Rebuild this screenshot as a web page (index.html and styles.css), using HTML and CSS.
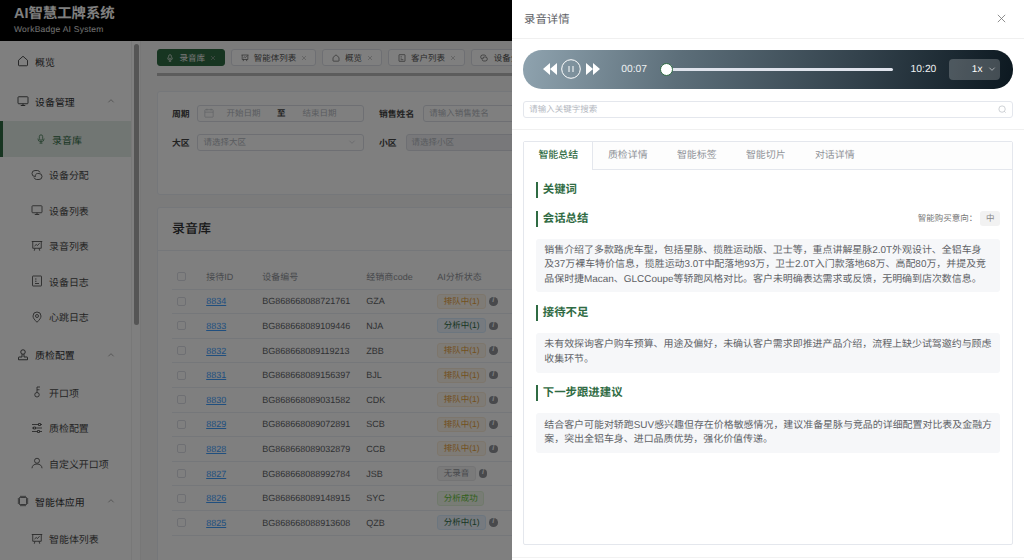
FILE: index.html
```html
<!DOCTYPE html>
<html lang="zh-CN">
<head>
    <meta charset="UTF-8">
    <meta name="viewport" content="width=device-width, initial-scale=1.0">
    <title>录音详情</title>
    <link rel="stylesheet" href="styles.css">
</head>
<body>
    <!-- icons -->
    <svg class="icon-defs" xmlns="http://www.w3.org/2000/svg">
        <symbol id="i-home" viewBox="0 0 24 24"><path d="M3 10.500 12 2.500l9 8V20a1.500 1.500 0 0 1-1.500 1.500h-15A1.500 1.500 0 0 1 3 20z"/></symbol>
        <symbol id="i-monitor" viewBox="0 0 24 24"><rect x="2" y="3.500" width="20" height="14" rx="1.500"/><path d="M12 17.500v3.500M7.500 21h9"/></symbol>
        <symbol id="i-mic" viewBox="0 0 24 24"><rect x="8" y="2" width="8" height="13" rx="4"/><path d="M4.500 11a7.500 7.500 0 0 0 15 0M12 18.500V22M8.500 22h7"/></symbol>
        <symbol id="i-link" viewBox="0 0 24 24"><path d="M9 15H8A6 6 0 0 1 8 3h5a6 6 0 0 1 5 4"/><path d="M13 9h3a6 6 0 0 1 0 12h-5a6 6 0 0 1-5-4"/><path d="M9 15a4.500 4.500 0 0 1 4-6"/></symbol>
        <symbol id="i-board" viewBox="0 0 24 24"><path d="M1.500 3h21M3.500 3v13.500h17V3M8 16.500 6.500 21.500M16 16.500l1.500 5"/><path d="m7 12 3.500-3 2.500 2 4-4.500"/></symbol>
        <symbol id="i-log" viewBox="0 0 24 24"><rect x="3" y="2" width="18" height="20" rx="1"/><path d="M8 8h3M8 12.500h3M8 17h8"/></symbol>
        <symbol id="i-pin" viewBox="0 0 24 24"><path d="M12 22.500C7 17.500 4 14 4 10a8 8 0 0 1 16 0c0 4-3 7.500-8 12.500z"/><circle cx="12" cy="10" r="3"/></symbol>
        <symbol id="i-stamp" viewBox="0 0 24 24"><circle cx="12" cy="6" r="4.500"/><path d="M3 21.500h18V17a1 1 0 0 0-1-1h-6v-5.500M10 10.500V16H4a1 1 0 0 0-1 1v4.500"/></symbol>
        <symbol id="i-key" viewBox="0 0 24 24"><circle cx="12" cy="17.500" r="4.500"/><path d="M12 13V2h6M12 7.500h5"/></symbol>
        <symbol id="i-sliders" viewBox="0 0 24 24"><path d="M2 5h13M19 5h3M2 12h3M9 12h13M2 19h11M17 19h5"/><path d="M15 3h4v4h-4zM5 10h4v4H5zM13 17h4v4h-4z"/></symbol>
        <symbol id="i-user" viewBox="0 0 24 24"><circle cx="12" cy="7.500" r="5"/><path d="M2 22.500c0-5 4-8.500 10-8.500s10 3.500 10 8.500"/></symbol>
        <symbol id="i-chip" viewBox="0 0 24 24"><rect x="4.500" y="4.500" width="15" height="15" rx="2.500"/><path d="M8 1.500v3M12 1.500v3M16 1.500v3M8 19.500v3M12 19.500v3M16 19.500v3M1.500 8h3M1.500 12h3M1.500 16h3M19.500 8h3M19.500 12h3M19.500 16h3"/></symbol>
        <symbol id="i-up" viewBox="0 0 24 24"><path d="m4 16 8-8 8 8"/></symbol>
        <symbol id="i-down" viewBox="0 0 24 24"><path d="m4 8 8 8 8-8"/></symbol>
        <symbol id="i-close" viewBox="0 0 24 24"><path d="m4 4 16 16M20 4 4 20"/></symbol>
        <symbol id="i-calendar" viewBox="0 0 24 24"><rect x="2" y="4" width="20" height="18" rx="1.500"/><path d="M2 10h20M7 1.500V6M17 1.500V6"/></symbol>
    </svg>

    <div class="app">
        <header class="topbar">
            <div class="logo-title">AI智慧工牌系统</div>
            <div class="logo-sub">WorkBadge AI System</div>
        </header>

        <div class="layout">
            <aside class="sidebar">
                <nav class="menu">
                    <a class="menu-item top-item"><svg class="menu-icon"><use href="#i-home"/></svg>概览</a>

                    <a class="menu-item group-title"><svg class="menu-icon"><use href="#i-monitor"/></svg>设备管理<svg class="chevron"><use href="#i-up"/></svg></a>
                    <div class="submenu">
                        <a class="menu-item active"><svg class="menu-icon mic-icon"><use href="#i-mic"/></svg>录音库</a>
                        <a class="menu-item"><svg class="menu-icon"><use href="#i-link"/></svg>设备分配</a>
                        <a class="menu-item"><svg class="menu-icon"><use href="#i-monitor"/></svg>设备列表</a>
                        <a class="menu-item"><svg class="menu-icon"><use href="#i-board"/></svg>录音列表</a>
                        <a class="menu-item"><svg class="menu-icon"><use href="#i-log"/></svg>设备日志</a>
                        <a class="menu-item"><svg class="menu-icon"><use href="#i-pin"/></svg>心跳日志</a>
                    </div>

                    <a class="menu-item group-title"><svg class="menu-icon"><use href="#i-stamp"/></svg>质检配置<svg class="chevron"><use href="#i-up"/></svg></a>
                    <div class="submenu">
                        <a class="menu-item"><svg class="menu-icon"><use href="#i-key"/></svg>开口项</a>
                        <a class="menu-item"><svg class="menu-icon"><use href="#i-sliders"/></svg>质检配置</a>
                        <a class="menu-item"><svg class="menu-icon"><use href="#i-user"/></svg>自定义开口项</a>
                    </div>

                    <a class="menu-item group-title"><svg class="menu-icon"><use href="#i-chip"/></svg>智能体应用<svg class="chevron"><use href="#i-up"/></svg></a>
                    <div class="submenu">
                        <a class="menu-item"><svg class="menu-icon"><use href="#i-board"/></svg>智能体列表</a>
                    </div>
                </nav>
                <div class="side-track"><div class="side-thumb"></div></div>
            </aside>

            <main class="content">
                <div class="page-tabs">
                    <span class="page-tab current"><svg class="tab-icon"><use href="#i-mic"/></svg>录音库<svg class="tab-x"><use href="#i-close"/></svg></span>
                    <span class="page-tab"><svg class="tab-icon"><use href="#i-board"/></svg>智能体列表<svg class="tab-x"><use href="#i-close"/></svg></span>
                    <span class="page-tab"><svg class="tab-icon"><use href="#i-home"/></svg>概览<svg class="tab-x"><use href="#i-close"/></svg></span>
                    <span class="page-tab"><svg class="tab-icon"><use href="#i-log"/></svg>客户列表<svg class="tab-x"><use href="#i-close"/></svg></span>
                    <span class="page-tab"><svg class="tab-icon"><use href="#i-link"/></svg>设备分配<svg class="tab-x"><use href="#i-close"/></svg></span>
                </div>
                <div class="tabs-scroll"></div>

                <section class="card filter-card">
                    <div class="filter-row">
                        <label class="filter-label">周期</label>
                        <div class="field date-field">
                            <svg class="cal-icon"><use href="#i-calendar"/></svg>
                            <span class="date-text">开始日期</span>
                            <span class="date-sep">至</span>
                            <span class="date-text">结束日期</span>
                        </div>
                        <label class="filter-label second">销售姓名</label>
                        <div class="field wide-field">请输入销售姓名</div>
                    </div>
                    <div class="filter-row">
                        <label class="filter-label">大区</label>
                        <div class="field select-field">请选择大区<svg class="select-arrow"><use href="#i-down"/></svg></div>
                        <label class="filter-label second">小区</label>
                        <div class="field wide-field disabled">请选择小区</div>
                    </div>
                </section>

                <section class="card table-card">
                    <h2 class="card-title">录音库</h2>
                    <div class="table-wrap">
                        <table class="record-table">
                            <thead>
                                <tr>
                                    <th class="col-check"><span class="checkbox"></span></th>
                                    <th class="col-id">接待ID</th>
                                    <th class="col-device">设备编号</th>
                                    <th class="col-code">经销商code</th>
                                    <th>AI分析状态</th>
                                </tr>
                            </thead>
                            <tbody>
                                <tr><td class="col-check"><span class="checkbox"></span></td><td><a class="record-link">8834</a></td><td>BG868668088721761</td><td>GZA</td><td><span class="tag wait">排队中(1)</span><span class="info">i</span></td></tr>
                                <tr><td class="col-check"><span class="checkbox"></span></td><td><a class="record-link">8833</a></td><td>BG868668089109446</td><td>NJA</td><td><span class="tag doing">分析中(1)</span><span class="info">i</span></td></tr>
                                <tr><td class="col-check"><span class="checkbox"></span></td><td><a class="record-link">8832</a></td><td>BG868668089119213</td><td>ZBB</td><td><span class="tag wait">排队中(1)</span><span class="info">i</span></td></tr>
                                <tr><td class="col-check"><span class="checkbox"></span></td><td><a class="record-link">8831</a></td><td>BG868668089156397</td><td>BJL</td><td><span class="tag wait">排队中(1)</span><span class="info">i</span></td></tr>
                                <tr><td class="col-check"><span class="checkbox"></span></td><td><a class="record-link">8830</a></td><td>BG868668089031582</td><td>CDK</td><td><span class="tag wait">排队中(1)</span><span class="info">i</span></td></tr>
                                <tr><td class="col-check"><span class="checkbox"></span></td><td><a class="record-link">8829</a></td><td>BG868668089072891</td><td>SCB</td><td><span class="tag wait">排队中(1)</span><span class="info">i</span></td></tr>
                                <tr><td class="col-check"><span class="checkbox"></span></td><td><a class="record-link">8828</a></td><td>BG868668089032879</td><td>CCB</td><td><span class="tag wait">排队中(1)</span><span class="info">i</span></td></tr>
                                <tr><td class="col-check"><span class="checkbox"></span></td><td><a class="record-link">8827</a></td><td>BG868668088992784</td><td>JSB</td><td><span class="tag none">无录音</span><span class="info">i</span></td></tr>
                                <tr><td class="col-check"><span class="checkbox"></span></td><td><a class="record-link">8826</a></td><td>BG868668089148915</td><td>SYC</td><td><span class="tag done">分析成功</span></td></tr>
                                <tr><td class="col-check"><span class="checkbox"></span></td><td><a class="record-link">8825</a></td><td>BG868668088913608</td><td>QZB</td><td><span class="tag doing">分析中(1)</span><span class="info">i</span></td></tr>
                            </tbody>
                        </table>
                    </div>
                </section>
            </main>
        </div>
    </div>

    <div class="mask"></div>

    <!-- 录音详情 drawer -->
    <aside class="drawer">
        <div class="drawer-head">
            <span class="drawer-title">录音详情</span>
            <svg class="drawer-close"><use href="#i-close"/></svg>
        </div>

        <div class="drawer-top">
            <div class="player">
                <svg class="skip-btn" viewBox="0 0 14 12"><path d="M7 0v12L0 6zM14 0v12L7 6z"/></svg>
                <svg class="pause-btn" viewBox="0 0 20 20"><circle cx="10" cy="10" r="9.300"/><path d="M8 7v6M12 7v6"/></svg>
                <svg class="skip-btn" viewBox="0 0 14 12"><path d="M0 0v12l7-6zM7 0v12l7-6z"/></svg>
                <span class="time time-now">00:07</span>
                <div class="progress"><span class="progress-dot"></span></div>
                <span class="time time-end">10:20</span>
                <div class="speed">1x<svg class="speed-arrow"><use href="#i-down"/></svg></div>
            </div>
            <div class="search-box">
                <span>请输入关键字搜索</span>
                <svg class="search-icon" viewBox="0 0 24 24"><circle cx="11.500" cy="11.500" r="9"/><path d="m18 18 3.500 3.500"/></svg>
            </div>
        </div>

        <div class="detail-card">
            <div class="detail-tabs">
                <span class="detail-tab selected">智能总结</span>
                <span class="detail-tab">质检详情</span>
                <span class="detail-tab">智能标签</span>
                <span class="detail-tab">智能切片</span>
                <span class="detail-tab">对话详情</span>
            </div>
            <div class="detail-body">
                <h3 class="section-title">关键词</h3>

                <div class="section-row">
                    <h3 class="section-title">会话总结</h3>
                    <div class="intent">智能购买意向：<span class="intent-tag">中</span></div>
                </div>
                <p class="text-block">销售介绍了多款路虎车型，包括星脉、揽胜运动版、卫士等，重点讲解星脉2.0T外观设计、全铝车身<br>及37万裸车特价信息，揽胜运动3.0T中配落地93万，卫士2.0T入门款落地68万、高配80万，并提及竞品保时捷Macan、GLCCoupe等轿跑风格对比。客户未明确表达需求或反馈，无明确到店次数信息。</p>

                <h3 class="section-title">接待不足</h3>
                <p class="text-block">未有效探询客户购车预算、用途及偏好，未确认客户需求即推进产品介绍，流程上缺少试驾邀约与顾虑收集环节。</p>

                <h3 class="section-title">下一步跟进建议</h3>
                <p class="text-block">结合客户可能对轿跑SUV感兴趣但存在价格敏感情况，建议准备星脉与竞品的详细配置对比表及金融方案，突出全铝车身、进口品质优势，强化价值传递。</p>
            </div>
        </div>
        <div class="drawer-foot"></div>
    </aside>
</body>
</html>
```

FILE: styles.css
```css
* {
    box-sizing: border-box;
}

html, body {
    margin: 0;
    height: 100%;
    overflow: hidden;
}

body {
    position: relative;
    font-family: "Liberation Sans", "Noto Sans CJK SC", sans-serif;
    font-size: 10px;
    color: #303133;
    background: #fff;
    text-rendering: geometricPrecision;
}

.icon-defs {
    display: none;
}

svg {
    fill: none;
    stroke: currentColor;
    stroke-width: 1.6;
}

.app {
    display: flex;
    flex-direction: column;
    height: 560px;
}

/* top bar */
.topbar {
    height: 41px;
    flex: none;
    padding: 6px 14px 0;
    background: #000;
    color: #fff;
}

.logo-title {
    font-size: 14.400px;
    line-height: 17px;
    font-weight: 700;
}

.logo-sub {
    margin-top: 1px;
    font-size: 8.500px;
    line-height: 11px;
    letter-spacing: 0.25px;
    color: #e4e4e4;
}

.layout {
    display: flex;
    flex: 1;
    min-height: 0;
}

/* sidebar */
.sidebar {
    display: flex;
    width: 141px;
    flex: none;
    background: #fff;
    border-right: 1px solid #eee;
    overflow: hidden;
}

.menu {
    width: 132px;
    flex: none;
    padding-top: 2.500px;
    border-right: 1px solid #f0f0f0;
}

.menu-item {
    display: flex;
    align-items: center;
    height: 35.550px;
    padding-left: 31px;
    font-size: 9.950px;
    color: #4a4a4a;
}

.top-item,
.group-title {
    padding-left: 17px;
    color: #303133;
}

.top-item {
    margin-bottom: 4.500px;
}

.group-title + .submenu {
    margin-top: 2.200px;
}

.submenu + .group-title {
    margin-top: 2.200px;
}

.menu-icon {
    width: 12px;
    height: 12px;
    margin-right: 6px;
    flex: none;
    stroke-width: 1.700;
}

.chevron {
    width: 8px;
    height: 8px;
    margin-left: auto;
    margin-right: 16px;
    stroke-width: 1.600;
    color: #666;
}

.menu-item.active {
    padding-left: 33px;
    border-left: 3px solid #2f6b43;
    background: #e3ece6;
    color: #2f6b43;
}

.mic-icon {
    width: 10px;
    margin-right: 6px;
}

.side-track {
    flex: 1;
    padding: 3px 1px 0 2px;
}

.side-thumb {
    width: 5px;
    height: 281px;
    border-radius: 3px;
    background: #aaa;
}

/* main area */
.content {
    flex: none;
    width: 883px;
    padding: 8px 0 0 15.700px;
    background: #f6f6f6;
    overflow: hidden;
}

.page-tabs {
    display: flex;
    gap: 6px;
    overflow: hidden;
}

.page-tab {
    display: flex;
    align-items: center;
    flex: none;
    height: 17px;
    padding: 0 8px 0 8.500px;
    border: 1px solid #dcdfe6;
    border-radius: 3px;
    background: #fff;
    font-size: 8.500px;
    color: #555;
}

.page-tab.current {
    border-color: #2f6b43;
    background: #2f6b43;
    color: #eee;
}

.tab-icon {
    width: 8px;
    height: 8px;
    margin-right: 5.300px;
    stroke-width: 2;
}

.tab-x {
    width: 6px;
    height: 6px;
    margin-left: 5px;
    stroke-width: 2.400;
    color: #aaa;
}

.tabs-scroll {
    height: 3px;
    margin: 7px 0 15px;
    background: #b8b8b8;
}

.card {
    width: 851px;
    border: 1px solid #ebeef5;
    border-radius: 3px;
    background: #fff;
}

.filter-card {
    height: 103.500px;
    padding: 13px 14.300px 0;
}

.filter-row {
    display: flex;
    align-items: center;
    height: 17px;
    margin-bottom: 12px;
}

.filter-label {
    width: 25.500px;
    flex: none;
    font-size: 8.800px;
    font-weight: 600;
    color: #444;
}

.filter-label.second {
    width: auto;
    margin: 0 9px 0 15px;
}

.field {
    display: flex;
    align-items: center;
    height: 17px;
    padding: 0 5px 1px;
    border: 1px solid #dcdfe6;
    border-radius: 3px;
    font-size: 8.500px;
    color: #b4b8bf;
}

.date-field,
.select-field {
    width: 166.500px;
    flex: none;
}

.cal-icon {
    width: 10px;
    height: 10px;
    margin: 0 1px;
    flex: none;
    stroke-width: 1.400;
}

.date-text {
    margin: 0 16.500px 0 11px;
    white-space: nowrap;
}

.date-sep {
    margin: 0 6px 0 0;
    font-weight: 600;
    color: #444;
}

.select-arrow {
    width: 8px;
    height: 8px;
    margin-left: auto;
    margin-right: 2px;
}

.wide-field {
    width: 200px;
    flex: none;
}

.wide-field.disabled {
    background: #f0f1f4;
}

.table-card {
    margin-top: 12.500px;
    height: 360px;
}

.card-title {
    height: 43px;
    margin: 0;
    padding: 0 14.300px;
    border-bottom: 1px solid #ebeef5;
    font-size: 13px;
    font-weight: 500;
    line-height: 42px;
    color: #303133;
}

.table-wrap {
    padding: 13.500px 14px 0;
}

.record-table {
    width: 800px;
    border-collapse: collapse;
    table-layout: fixed;
    font-size: 9px;
}

.record-table th,
.record-table td {
    height: 24.600px;
    padding: 0;
    border-bottom: 1px solid #ebeef5;
    text-align: left;
    font-weight: 400;
    color: #606266;
    white-space: nowrap;
}

.record-table th {
    color: #909399;
}

.col-check {
    width: 34.500px;
    padding-left: 5.500px !important;
}

.col-id {
    width: 56px;
}

.col-device {
    width: 104px;
}

.col-code {
    width: 71px;
}

.checkbox {
    display: block;
    width: 9px;
    height: 9px;
    border: 1px solid #dcdfe6;
    border-radius: 2px;
    background: #fff;
}

.record-link {
    color: #409eff;
    text-decoration: underline;
}

.tag {
    display: inline-block;
    height: 15px;
    padding: 0 5.500px;
    border: 1px solid;
    border-radius: 3px;
    font-size: 8.500px;
    line-height: 13px;
    vertical-align: middle;
}

.tag.wait {
    border-color: #faecd8;
    background: #fdf6ec;
    color: #e6a23c;
}

.tag.doing {
    border-color: #d9ecff;
    background: #ecf5ff;
    color: #2f6b43;
}

.tag.none {
    border-color: #e9e9eb;
    background: #f4f4f5;
    color: #909399;
}

.tag.done {
    border-color: #e1f3d8;
    background: #f0f9eb;
    color: #67c23a;
}

.info {
    display: inline-block;
    width: 8.500px;
    height: 8.500px;
    margin-left: 3px;
    border-radius: 50%;
    background: #909399;
    color: #fff;
    font-size: 7px;
    font-weight: 700;
    font-style: italic;
    line-height: 8.500px;
    text-align: center;
    vertical-align: middle;
}

/* dim layer and drawer */
.mask {
    position: absolute;
    inset: 0;
    background: rgba(0, 0, 0, .5);
    backdrop-filter: blur(.45px);
}

.drawer {
    position: absolute;
    top: 0;
    right: 0;
    bottom: 0;
    display: flex;
    flex-direction: column;
    width: 512px;
    background: #fff;
}

.drawer-head {
    display: flex;
    align-items: center;
    justify-content: space-between;
    height: 38.500px;
    flex: none;
    padding: 0 17px 0 12px;
    border-bottom: 1px solid #f0f0f0;
}

.drawer-title {
    font-size: 11.400px;
    color: #606266;
}

.drawer-close {
    width: 11px;
    height: 11px;
    stroke-width: 1.800;
    color: #777;
}

.drawer-top {
    height: 91px;
    flex: none;
    padding: 11.500px 11.300px 0;
    border-bottom: 1px solid #f0f0f0;
}

.player {
    display: flex;
    align-items: center;
    height: 38.500px;
    padding: 0 11.500px 0 19.500px;
    border-radius: 19px;
    background: linear-gradient(100deg, #8fa3af 0%, #5c6e79 32%, #33424c 68%, #0c1820 100%);
    color: #fff;
}

.skip-btn {
    width: 14px;
    height: 12px;
    flex: none;
    fill: #fff;
    stroke: none;
}

.pause-btn {
    width: 20px;
    height: 20px;
    margin: 0 4.500px;
    flex: none;
    stroke: #fff;
    stroke-width: 1;
}

.time {
    flex: none;
    font-size: 10.300px;
    color: #eef1f3;
}

.time-now {
    margin: 0 19.500px 0 21.500px;
}

.time-end {
    margin: 0 12.500px 0 18px;
}

.progress {
    position: relative;
    width: 226px;
    height: 3.500px;
    flex: none;
    border-radius: 2px;
    background: #dfe3ec;
}

.progress-dot {
    position: absolute;
    top: -4.500px;
    left: -6.500px;
    width: 13px;
    height: 13px;
    border: 1px solid #2f6b43;
    border-radius: 50%;
    background: #fff;
}

.speed {
    display: flex;
    align-items: center;
    width: 51px;
    height: 21px;
    flex: none;
    padding-left: 23px;
    border-radius: 4px;
    background: rgba(255, 255, 255, .22);
    font-size: 10px;
}

.speed-arrow {
    width: 8px;
    height: 8px;
    margin-left: 6px;
}

.search-box {
    display: flex;
    align-items: center;
    justify-content: space-between;
    height: 16.600px;
    margin-top: 12.500px;
    padding: 0 5px 1px;
    border: 1px solid #e4e7ed;
    border-radius: 3px;
    font-size: 8.500px;
    color: #b4b8bf;
}

.search-icon {
    width: 8.500px;
    height: 8.500px;
    stroke-width: 1.800;
}

.detail-card {
    height: 404px;
    flex: none;
    margin: 11.500px 11.300px 0;
    border: 1px solid #e4e7ed;
    border-radius: 2px;
}

.detail-tabs {
    display: flex;
    height: 28px;
    border-bottom: 1px solid #e4e7ed;
    background: #fdfdfd;
}

.detail-tab {
    width: 69px;
    height: 28px;
    line-height: 27px;
    text-align: center;
    font-size: 9.950px;
    color: #909399;
}

.detail-tab.selected {
    border-right: 1px solid #e4e7ed;
    background: #fff;
    font-weight: 500;
    color: #2f6b43;
}

.detail-body {
    padding: 11.500px 11.500px 0;
}

.section-title {
    height: 16px;
    margin: 0 0 11.500px;
    padding-left: 5px;
    border-left: 2.500px solid #2f6b43;
    font-size: 11.400px;
    font-weight: 600;
    line-height: 16px;
    color: #2f6b43;
}

.section-row {
    display: flex;
    align-items: center;
    justify-content: space-between;
    margin: 13px 0 11.500px;
}

.section-row .section-title {
    margin: 0;
}

.intent {
    display: flex;
    align-items: center;
    padding-bottom: 1.500px;
    font-size: 8.500px;
    line-height: 14px;
    color: #777;
}

.intent-tag {
    width: 20px;
    height: 15px;
    margin-left: 3px;
    border-radius: 3px;
    background: #f2f2f2;
    line-height: 14px;
    text-align: center;
    color: #888;
}

.text-block {
    margin: 0 0 12.800px;
    padding: 5.700px 7.300px 5.700px 8.500px;
    border-radius: 3px;
    background: #f6f7f9;
    font-size: 9.950px;
    line-height: 14.200px;
    color: #606266;
}

.drawer-foot {
    flex: 1;
    margin-top: 12px;
    border-top: 1px solid #f2f2f2;
}
```
